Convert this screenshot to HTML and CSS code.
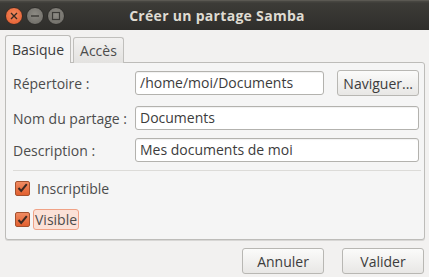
FILE: index.html
```html
<!DOCTYPE html>
<html lang="fr">

<head>
  <meta charset="UTF-8">
  <title>Créer un partage Samba</title>
  <link rel="stylesheet" href="styles.css">
</head>

<body>
  <div class="window">
    <!-- Barre de titre -->
    <div class="titlebar">
      <div class="wm-buttons">
        <span class="wm-btn wm-close">
          <svg width="8" height="8" viewBox="0 0 8 8"><path d="M1 1L7 7M7 1L1 7" stroke="#3a2a22" stroke-width="1.4"/></svg>
        </span>
        <span class="wm-btn wm-min">
          <svg width="10" height="10" viewBox="0 0 10 10"><path d="M1 5H9" stroke="#3b3a36" stroke-width="1.4"/></svg>
        </span>
        <span class="wm-btn wm-max">
          <svg width="10" height="10" viewBox="0 0 10 10"><rect x="1.5" y="1.5" width="7" height="7" fill="none" stroke="#3b3a36" stroke-width="1.2"/></svg>
        </span>
      </div>
      <div class="title">Créer un partage Samba</div>
    </div>

    <div class="content">
      <!-- Onglets -->
      <div class="tabs">
        <div class="tab active">Basique</div>
        <div class="tab">Accès</div>
      </div>

      <div class="panel">
        <div class="form-row first">
          <label class="label">Répertoire :</label>
          <div class="field-with-button">
            <div class="entry">/home/moi/Documents</div>
            <button class="btn">Naviguer...</button>
          </div>
        </div>
        <div class="form-row second">
          <label class="label">Nom du partage :</label>
          <div class="entry">Documents</div>
        </div>
        <div class="form-row">
          <label class="label">Description :</label>
          <div class="entry">Mes documents de moi</div>
        </div>

        <div class="separator"></div>

        <div class="check-row">
          <span class="checkbox">
            <svg width="11" height="10" viewBox="0 0 11 10"><path d="M1.5 5L4.2 8L9.8 1.2" fill="none" stroke="#3d2a22" stroke-width="2"/></svg>
          </span>
          <span class="check-label">Inscriptible</span>
        </div>
        <div class="check-row">
          <span class="checkbox">
            <svg width="11" height="10" viewBox="0 0 11 10"><path d="M1.5 5L4.2 8L9.8 1.2" fill="none" stroke="#3d2a22" stroke-width="2"/></svg>
          </span>
          <span class="check-label focused">Visible</span>
        </div>
      </div>

      <div class="actions">
        <button class="btn action">Annuler</button>
        <button class="btn action">Valider</button>
      </div>
    </div>
  </div>
</body>

</html>
```

FILE: styles.css
```css
body {
  margin: 0;
  font-family: "Open Sans", "DejaVu Sans", sans-serif;
  font-size: 13px;
  color: #3c3c3c;
  background-color: #f2f1f0;
}

.window {
  width: 429px;
  height: 277px;
  overflow: hidden;
}

/* Barre de titre */
.titlebar {
  height: 30px;
  display: flex;
  align-items: center;
  background: linear-gradient(#4a4944, #3c3b37 8%, #2f2e2b);
  border-top: 1px solid #5a5852;
  box-sizing: border-box;
}

.wm-buttons {
  display: flex;
  gap: 3px;
  padding-left: 5px;
  width: 100px;
}

.wm-btn {
  width: 18px;
  height: 18px;
  border-radius: 50%;
  display: flex;
  align-items: center;
  justify-content: center;
  box-sizing: border-box;
}

.wm-close {
  background: radial-gradient(circle at 50% 40%, #f58a5e, #e2582a);
  border: 1px solid #3a2b24;
}

.wm-min,
.wm-max {
  background: radial-gradient(circle at 50% 40%, #8d8b84, #6a6863);
  border: 1px solid #2e2d2a;
}

.title {
  flex: 1;
  text-align: center;
  margin-left: -100px;
  color: #dfdbd2;
  font-weight: bold;
  font-size: 14px;
  letter-spacing: 0.3px;
}

.content {
  padding: 6px 5px 0 5px;
}

/* Onglets */
.tabs {
  display: flex;
  align-items: flex-end;
  gap: 2px;
  height: 27px;
  position: relative;
  z-index: 1;
}

.tab {
  padding: 0 6px;
  height: 25px;
  line-height: 25px;
  border: 1px solid #c0bfbc;
  border-bottom: none;
  border-radius: 3px 3px 0 0;
  background: linear-gradient(#f2f1f0, #e3e2e0);
  color: #4c4c4c;
  font-size: 14px;
}

.tab.active {
  height: 27px;
  line-height: 27px;
  background: #f5f5f5;
  color: #3c3c3c;
  border-color: #bdbcb9;
  padding: 0 6px;
}

.panel {
  width: 420px;
  box-sizing: border-box;
  border: 1px solid #bdbcb9;
  border-radius: 0 3px 3px 3px;
  background-color: #f5f5f5;
  padding: 7px 5px 9px 7px;
  margin-top: -1px;
  box-shadow: 0 1px 0 #d8d7d5;
}

.form-row {
  display: flex;
  align-items: center;
  margin-bottom: 8px;
}

.form-row.first {
  margin-bottom: 10px;
}

.label {
  width: 122px;
  flex-shrink: 0;
  color: #4c4c4c;
  font-size: 14px;
}

.field-with-button {
  flex: 1;
  display: flex;
  align-items: center;
  gap: 13px;
}

.entry {
  flex: 1;
  height: 24px;
  line-height: 22px;
  box-sizing: border-box;
  border: 1px solid #b3b2ae;
  border-radius: 3px;
  background-color: #ffffff;
  padding: 0 4px;
  font-size: 14px;
  color: #3c3c3c;
  box-shadow: inset 0 1px 1px rgba(0, 0, 0, 0.06);
}

.btn {
  font-family: inherit;
  font-size: 14px;
  color: #3c3c3c;
  height: 26px;
  padding: 0 5px;
  border: 1px solid #b8b7b3;
  border-radius: 3px;
  background: linear-gradient(#fbfbfa, #e8e7e5);
  box-sizing: border-box;
}

.separator {
  height: 1px;
  background-color: #dcdbd8;
  margin: 0 -2px 10px 0;
}

.check-row {
  display: flex;
  align-items: center;
  height: 14px;
  padding-left: 2px;
  margin-bottom: 14px;
}

.check-row:last-child {
  margin-bottom: 0;
  height: 21px;
}

.checkbox {
  width: 15px;
  height: 15px;
  box-sizing: border-box;
  border: 1px solid #a3512f;
  border-radius: 2px;
  background: linear-gradient(#f08b62, #e2602f);
  display: flex;
  align-items: center;
  justify-content: center;
  margin-right: 5px;
}

.check-label {
  font-size: 14px;
  color: #4c4c4c;
  line-height: 19px;
  padding: 0 1px;
  border: 1px solid transparent;
}

.check-label.focused {
  background-color: #fbe1d7;
  border-color: #f0a286;
  border-radius: 3px;
  margin-left: -2px;
}

.actions {
  display: flex;
  justify-content: flex-end;
  gap: 18px;
  padding-top: 8px;
}

.btn.action {
  width: 82px;
}
```
